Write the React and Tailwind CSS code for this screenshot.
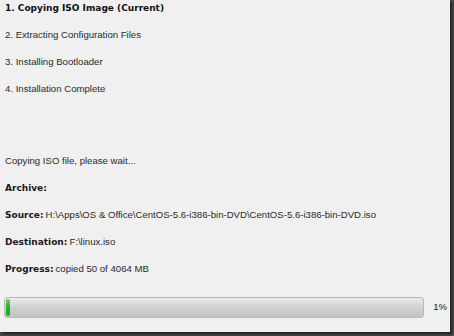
import React from 'react'

const steps = [
  { label: '1. Copying ISO Image (Current)', current: true },
  { label: '2. Extracting Configuration Files' },
  { label: '3. Installing Bootloader' },
  { label: '4. Installation Complete' },
]

function Field({ label, children }) {
  return (
    <div className="h-[27px] flex items-center">
      <span className="font-bold font-['DejaVu_Sans',sans-serif] text-[9px] text-[#1a1a1a]">{label}</span>
      {children && <span className="ml-[2px]">{children}</span>}
    </div>
  )
}

function App() {
  const pct = 1
  return (
    <div className="w-[454px] h-[336px] bg-[#4a4a4a] relative overflow-hidden font-['Liberation_Sans',sans-serif] text-[9.6px] text-[#2a2a2a]">
      <div className="absolute left-0 top-0 w-[450px] h-[332px] bg-[#f0f0f0] shadow-[2px_2px_3px_rgba(0,0,0,0.6)]">
        <div className="flex flex-col pl-[5px]">
          <div className="flex flex-col -mt-[5px]">
            {steps.map((s) => (
              <div key={s.label} className={`h-[27px] flex items-center ${s.current ? "font-bold font-['DejaVu_Sans',sans-serif] text-[9px] text-[#111]" : ''}`}>
                {s.label}
              </div>
            ))}
          </div>
          <div className="mt-[45px] flex flex-col">
            <div className="h-[27px] flex items-center">Copying ISO file, please wait...</div>
            <Field label="Archive:" />
            <Field label="Source:">H:\Apps\OS &amp; Office\CentOS-5.6-i386-bin-DVD\CentOS-5.6-i386-bin-DVD.iso</Field>
            <Field label="Destination:">F:\linux.iso</Field>
            <Field label="Progress:">copied 50 of 4064 MB</Field>
          </div>
        </div>
        <div className="flex items-center mt-[14px] pl-[4px] pr-[3px]">
          <div className="w-[420px] h-[21px] rounded-[3px] border border-[#b9b9b9] bg-gradient-to-b from-[#ececec] via-[#d0d0d0] to-[#c4c4c4] p-[1px] overflow-hidden">
            <div className="h-full rounded-[2px] bg-gradient-to-b from-[#5fd45f] via-[#22b322] to-[#1ea51e]" style={{ width: `${pct}%` }} />
          </div>
          <span className="ml-auto text-[#222]">{pct}%</span>
        </div>
      </div>
    </div>
  )
}

export default App
